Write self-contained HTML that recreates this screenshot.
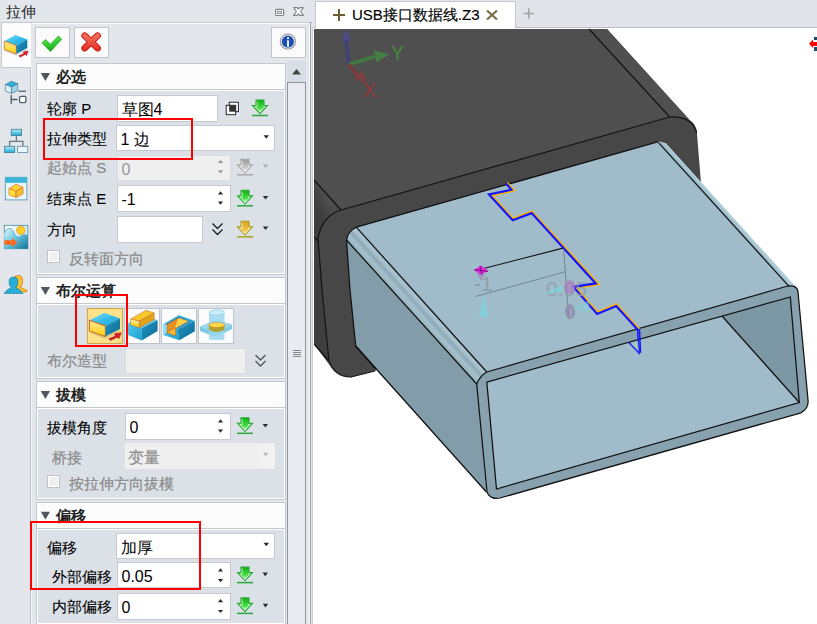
<!DOCTYPE html>
<html><head><meta charset="utf-8">
<style>
*{box-sizing:border-box;margin:0;padding:0}
html,body{width:817px;height:624px;overflow:hidden;background:#e3e7ec;font-family:"Liberation Sans",sans-serif;font-size:15px;color:#1a1a1a;position:relative}
.a{position:absolute}
.t{position:absolute;white-space:nowrap;line-height:15px}
.hdr{position:absolute;left:36px;width:250px;height:27px;background:#fcfcfc;border:1px solid #c3c8cf}
.hdr .tri{position:absolute;left:4px;top:9px;width:0;height:0;border-left:4.5px solid transparent;border-right:4.5px solid transparent;border-top:8px solid #51565f}
.hdr .ht{position:absolute;left:19px;top:5px;font-weight:bold;line-height:15px;color:#222}
.body{position:absolute;left:36px;width:250px;background:#dce1e8;border:1px solid #c3c8cf;box-shadow:inset 1px 1px 0 #fff,inset -1px -1px 0 #fff}
.inp{position:absolute;background:#fff;border:1px solid #c6cad0}
.dis{background:#efefef;border-color:#d9dcdf}
.lbl{position:absolute;white-space:nowrap;line-height:15px;color:#000;-webkit-text-stroke:0.08px #000}
.gray{color:#8a8a8a;-webkit-text-stroke:0.2px #8a8a8a}
.val{position:absolute;left:3.5px;top:6px;line-height:16px;font-size:16px;white-space:nowrap;color:#000}
.dd{position:absolute;width:0;height:0;border-left:2.5px solid transparent;border-right:2.5px solid transparent;border-top:3.5px solid #333}
.du{position:absolute;width:0;height:0;border-left:2.5px solid transparent;border-right:2.5px solid transparent;border-bottom:3.5px solid #333}
.red{position:absolute;border:2px solid #f00}
.btn{position:absolute;background:#fbfbfb;border:1px solid #bfc4cb}
.chk{position:absolute;width:13px;height:13px;border:1px solid #bfc2c6;background:#f0f0f0;box-shadow:inset 0 0 0 1px #fff}
</style></head><body>

<!-- title -->
<div class="t" style="left:6px;top:4px;color:#2e2e2e">拉伸</div>

<!-- panel outer -->
<div class="a" style="left:1px;top:22px;width:311px;height:1px;background:#c3c8cf"></div>
<!-- tab strip border -->
<div class="a" style="left:30px;top:67px;width:1px;height:557px;background:#b9bec6"></div>
<div class="a" style="left:31px;top:67px;width:1px;height:557px;background:#f7f8fa"></div>
<!-- active tab -->
<div class="a" style="left:1px;top:22px;width:30px;height:46px;background:#fcfcfc;border:1px solid #c3c8cf;border-right:none"></div>

<!-- action buttons -->
<div class="btn" style="left:35px;top:27px;width:35px;height:31px"></div>
<div class="btn" style="left:74px;top:27px;width:35px;height:31px"></div>
<div class="btn" style="left:271px;top:27px;width:35px;height:31px"></div>

<!-- scrollbar -->
<div class="a" style="left:287px;top:61px;width:19px;height:21px;background:#d9dee6"></div>
<div class="a" style="left:287px;top:82px;width:19px;height:542px;background:#e8ebf0;border:1px solid #8f969f;border-bottom:none"></div>
<div class="a" style="left:293px;top:350px;width:8px;height:1px;background:#888;box-shadow:0 2px 0 #888,0 4px 0 #888,0 6px 0 #888"></div>
<!-- panel right borders -->
<div class="a" style="left:310px;top:22px;width:1px;height:602px;background:#9aa1aa"></div>
<div class="a" style="left:309px;top:23px;width:1px;height:601px;background:#fafbfc"></div>
<div class="a" style="left:32px;top:23px;width:277px;height:1px;background:#fafbfc"></div>
<div class="a" style="left:313px;top:28px;width:1px;height:596px;background:#fff"></div>
<div class="a" style="left:312px;top:28px;width:1px;height:596px;background:#c8ccd2"></div>

<!-- ===== Section 1 ===== -->
<div class="hdr" style="top:63px"><div class="ht">必选</div></div>
<div class="body" style="top:89px;height:186px"></div>
<div class="lbl" style="left:47px;top:101px">轮廓 P</div>
<div class="inp" style="left:117px;top:95px;width:101px;height:27px"><div class="val">草图4</div></div>
<div class="lbl" style="left:47px;top:131px">拉伸类型</div>
<div class="inp" style="left:116px;top:125px;width:159px;height:26px"><div class="val">1 边</div></div>
<div class="lbl gray" style="left:47px;top:160px">起始点 S</div>
<div class="inp dis" style="left:117px;top:155px;width:114px;height:26px"><div class="val" style="color:#999">0</div></div>

<div class="lbl" style="left:47px;top:191px">结束点 E</div>
<div class="inp" style="left:117px;top:185px;width:114px;height:27px"><div class="val">-1</div></div>

<div class="lbl" style="left:47px;top:222px">方向</div>
<div class="inp" style="left:117px;top:216px;width:86px;height:27px"></div>

<div class="chk" style="left:47px;top:250px"></div>
<div class="lbl gray" style="left:69px;top:251px">反转面方向</div>
<div class="red" style="left:43px;top:118px;width:150px;height:42px"></div>

<!-- ===== Section 2 ===== -->
<div class="hdr" style="top:277px"><div class="ht">布尔运算</div></div>
<div class="body" style="top:303px;height:76px"></div>
<div class="btn" style="left:87px;top:308px;width:36px;height:36px;background:#fde28a;border-color:#d3a54a"></div>
<div class="btn" style="left:124px;top:308px;width:36px;height:36px"></div>
<div class="btn" style="left:161px;top:308px;width:36px;height:36px"></div>
<div class="btn" style="left:198px;top:308px;width:36px;height:36px"></div>
<div class="lbl gray" style="left:47px;top:353px">布尔造型</div>
<div class="inp dis" style="left:125px;top:348px;width:121px;height:26px"></div>
<div class="red" style="left:75px;top:294px;width:53px;height:53px"></div>

<!-- ===== Section 3 ===== -->
<div class="hdr" style="top:381px"><div class="ht">拔模</div></div>
<div class="body" style="top:407px;height:93px"></div>
<div class="lbl" style="left:47px;top:420px">拔模角度</div>
<div class="inp" style="left:125px;top:413px;width:106px;height:27px"><div class="val">0</div></div>

<div class="lbl gray" style="left:52px;top:450px">桥接</div>
<div class="inp dis" style="left:125px;top:443px;width:150px;height:26px;border-color:#eee"><div class="val" style="color:#999;left:2px"></div><div class="val" style="color:#8c8c8c;left:2px;-webkit-text-stroke:0.15px #8c8c8c">变量</div><div class="a" style="left:133px;top:0;width:16px;height:24px;background:#f2f2f2"></div></div>
<div class="chk" style="left:47px;top:475px"></div>
<div class="lbl gray" style="left:69px;top:476px">按拉伸方向拔模</div>

<!-- ===== Section 4 ===== -->
<div class="hdr" style="top:502px"><div class="ht">偏移</div></div>
<div class="body" style="top:528px;height:97px"></div>
<div class="lbl" style="left:47px;top:540px">偏移</div>
<div class="inp" style="left:116px;top:533px;width:159px;height:26px"><div class="val">加厚</div></div>
<div class="lbl" style="left:52px;top:569px">外部偏移</div>
<div class="inp" style="left:117px;top:562px;width:114px;height:26px"><div class="val">0.05</div></div>

<div class="lbl" style="left:52px;top:599px">内部偏移</div>
<div class="inp" style="left:117px;top:593px;width:114px;height:27px"><div class="val">0</div></div>

<div class="red" style="left:30px;top:521px;width:171px;height:69px"></div>

<!-- ===== right: tab bar + viewport ===== -->
<div class="a" style="left:313px;top:0;width:504px;height:28px;background:#e1e5ea;border-bottom:1px solid #b9bec5"></div>
<div class="a" style="left:315px;top:1px;width:201px;height:28px;background:#fff;border:1px solid #c3c8cf;border-bottom:none"></div>
<div class="t" style="left:352px;top:7px;color:#000;-webkit-text-stroke:0.15px #000">USB接口数据线.Z3</div>
<svg class="a" style="left:313px;top:0" width="504" height="28" viewBox="313 0 504 28"><path d="M333,15 H345 M339,9 V21" stroke="#6d5b33" stroke-width="2"/><path d="M487,10.5 L497,19.5 M497,10.5 L487,19.5" stroke="#7d6c45" stroke-width="2.2"/><path d="M523.5,13.5 H534 M528.75,8.3 V18.8" stroke="#a4a4a4" stroke-width="1.6"/></svg>
<div class="a" style="left:314px;top:28px;width:503px;height:596px;background:#fff"></div>
<svg class="a" style="left:0;top:0" width="312" height="624" viewBox="0 0 312 624">
<defs>
<linearGradient id="gGr" x1="0" y1="0" x2="0" y2="1"><stop offset="0" stop-color="#10b010"/><stop offset="0.55" stop-color="#40dd40"/><stop offset="1" stop-color="#d8ffd8"/></linearGradient>
<linearGradient id="gYe" x1="0" y1="0" x2="0" y2="1"><stop offset="0" stop-color="#d7a020"/><stop offset="0.6" stop-color="#f5c040"/><stop offset="1" stop-color="#fff0b0"/></linearGradient>
<linearGradient id="gGy" x1="0" y1="0" x2="0" y2="1"><stop offset="0" stop-color="#9a9a9a"/><stop offset="0.6" stop-color="#c8c8c8"/><stop offset="1" stop-color="#f5f5f5"/></linearGradient>
<linearGradient id="gCy" x1="0" y1="0" x2="0" y2="1"><stop offset="0" stop-color="#bdeefa"/><stop offset="1" stop-color="#15a9d6"/></linearGradient>
<linearGradient id="gSky" x1="0" y1="0" x2="1" y2="1"><stop offset="0" stop-color="#ffffff"/><stop offset="1" stop-color="#a8e0f5"/></linearGradient>
<linearGradient id="gHill" x1="0" y1="0" x2="1" y2="1"><stop offset="0" stop-color="#e8f8fc"/><stop offset="0.45" stop-color="#6cc8e4"/><stop offset="1" stop-color="#0f6f92"/></linearGradient>
<g id="arr"><path d="M4,0.5 H12 V6 H15.5 L8,14.2 L0.5,6 H4 Z" stroke-width="1.1"/><path d="M5.2,1.8 V7.2 H2.9 L8,12.6 L13.1,7.2 H10.8" fill="none" stroke="#fff" stroke-width="0.9" opacity="0.75"/><path d="M0,16 H16" stroke-width="1.5"/></g>
<linearGradient id="cTop" x1="0" y1="0" x2="1" y2="1"><stop offset="0" stop-color="#8fe0f8"/><stop offset="0.5" stop-color="#33bde8"/><stop offset="1" stop-color="#1fa6d6"/></linearGradient>
<linearGradient id="cFr" x1="0" y1="0" x2="0" y2="1"><stop offset="0" stop-color="#ffe9a0"/><stop offset="1" stop-color="#ffd000"/></linearGradient>
<linearGradient id="cRt" x1="0" y1="0" x2="1" y2="1"><stop offset="0" stop-color="#2396c4"/><stop offset="1" stop-color="#0c6a94"/></linearGradient>
<linearGradient id="cLf" x1="0" y1="0" x2="1" y2="1"><stop offset="0" stop-color="#58c8ec"/><stop offset="1" stop-color="#1aa0d0"/></linearGradient>
<g id="cube">
<path d="M0.5,9 L12,21.5 L23,15.5 L23.5,17 L12,23 L0,18 Z" fill="#000" opacity="0.12"/>
<path d="M0,8 L11,2 L23,6.5 L12,12.5 Z" fill="url(#cTop)"/>
<path d="M0,8 L12,12.5 L12,21 L0,16.5 Z" fill="url(#cFr)" stroke="#c8702a" stroke-width="0.8"/>
<path d="M12,12.5 L23,6.5 L23,15 L12,21 Z" fill="url(#cRt)"/>
<path d="M14.5,22.8 L19.5,20.6 L19,18.8 L24,18 L22.2,22.8 L21,21.5 L15.8,24.2 Z" fill="#d8202a" stroke="#b01018" stroke-width="0.4"/>
</g>
</defs>
<!-- tab icon 1 extrude -->
<use href="#cube" transform="translate(4.3,33)"/>
<!-- tab icon 2 -->
<g>
<path d="M5.4,84.5 L11.5,81.3 L17.7,83.7 L11.5,87 Z" fill="#2fb5dd" stroke="#3d6a80" stroke-width="0.6"/>
<path d="M5.4,84.5 L11.5,87 L11.5,93.5 L5.3,91 Z" fill="#d8eef8" stroke="#3d6a80" stroke-width="0.6"/>
<path d="M11.5,87 L17.7,83.7 L17.7,90.5 L11.5,93.5 Z" fill="#9fd4ef" stroke="#3d6a80" stroke-width="0.6"/>
<path d="M18.5,91.3 H26" stroke="#5a6a75" stroke-width="1.4"/>
<path d="M11.2,95 V104 M11.2,99.5 H17.5" stroke="#4c5c68" stroke-width="1.3" fill="none"/>
<rect x="19.6" y="96.3" width="6.3" height="6.3" rx="1" fill="#fff" stroke="#4a6070" stroke-width="1.3"/>
</g>
<!-- tab icon 3 -->
<g>
<rect x="11.2" y="129.3" width="10.2" height="6.2" fill="url(#gCy)" stroke="#3d7a90" stroke-width="0.8"/>
<path d="M16.4,135.5 V141.4 M9.6,146 V141.4 H23 V146" stroke="#6a7a86" stroke-width="1.3" fill="none"/>
<rect x="4.5" y="146.3" width="10.2" height="6.2" fill="url(#gCy)" stroke="#3d7a90" stroke-width="0.8"/>
<rect x="17.6" y="146.3" width="10.2" height="6.2" fill="#e8f8ff" stroke="#5a8aa0" stroke-width="0.8"/>
</g>
<!-- tab icon 4 -->
<g>
<rect x="5.3" y="177.3" width="21.6" height="22.6" fill="#e8f6fc" stroke="#4a90b0" stroke-width="0.8"/>
<rect x="5.3" y="177.3" width="21.6" height="5.5" fill="#3ab5dc"/>
<path d="M9,188.5 L16,184.3 L23,187.3 L16,191.3 Z" fill="#ffd23a" stroke="#e07020" stroke-width="0.7"/>
<path d="M9,188.5 L16,191.3 L16,197.5 L9,194.8 Z" fill="#ffe040" stroke="#e07020" stroke-width="0.7"/>
<path d="M16,191.3 L23,187.3 L23,194 L16,197.5 Z" fill="#f5c030" stroke="#e07020" stroke-width="0.7"/>
</g>
<!-- tab icon 5 -->
<g>
<rect x="4.3" y="225.3" width="23.6" height="23.4" fill="url(#gSky)" stroke="#3a88a8" stroke-width="0.8"/>
<path d="M4.3,233 Q9,225 13,231 Q17,240 21,236 Q25,233 27.9,236 V248.7 H4.3 Z" fill="url(#gHill)"/><path d="M4.3,233 Q9,225 13,231 Q17,240 21,236 Q25,233 27.9,236" fill="none" stroke="#4d93b0" stroke-width="0.7"/>
<circle cx="20.8" cy="230.3" r="4.2" fill="#ffce1f" stroke="#e08a20" stroke-width="0.6"/>
<path d="M4.3,240.3 H12.2 V238 L17.5,242.5 L12.2,247 V244.8 H4.3 Z" fill="#ff6a20"/>
</g>
<!-- tab icon 6 -->
<g>
<path d="M15,276 Q22,274 22.5,279 Q23,286 20,287 L27.5,290.5 L26,292 L17,292 Z" fill="#fbc02a" stroke="#c06a20" stroke-width="0.6"/>
<path d="M13.5,277 Q18,277 18,282 Q18,286.5 15.5,287.5 Q20,289 23,293.5 H4 Q7,289 11.5,287.5 Q9,286.5 9,282 Q9,277 13.5,277 Z" fill="#28aed6" stroke="#1a7aa0" stroke-width="0.6"/>
</g>

<!-- check -->
<linearGradient id="gChk" x1="0" y1="0" x2="0.3" y2="1"><stop offset="0" stop-color="#8ee84a"/><stop offset="0.5" stop-color="#3cd03a"/><stop offset="1" stop-color="#1aae1a"/></linearGradient>
<path d="M42,42.9 L45.6,39.5 L50.4,44.3 L58.4,35.9 L61.7,39.3 L50.4,51.6 Z" fill="url(#gChk)" stroke="#19a819" stroke-width="0.7" stroke-linejoin="round"/>
<!-- X -->
<linearGradient id="gX" x1="0" y1="32" x2="0" y2="52" gradientUnits="userSpaceOnUse"><stop offset="0" stop-color="#f27a66"/><stop offset="1" stop-color="#e42a1c"/></linearGradient>
<path d="M84.7,35.7 L97.6,48.1 M97.6,35.7 L84.7,48.1" stroke="#cc1010" stroke-width="6.6" stroke-linecap="round"/>
<path d="M84.7,35.7 L97.6,48.1 M97.6,35.7 L84.7,48.1" stroke="url(#gX)" stroke-width="4.8" stroke-linecap="round"/>
<!-- info -->
<circle cx="287.9" cy="41.7" r="7.5" fill="#fff" stroke="#a0a0a0" stroke-width="1.3"/>
<circle cx="287.9" cy="41.7" r="6.1" fill="#1b4fb5"/>
<rect x="287" y="37.3" width="2" height="1.8" fill="#fff"/>
<rect x="287" y="40.3" width="2" height="6.5" fill="#eee"/>
<!-- title restore / close -->
<rect x="275.6" y="9.3" width="8" height="6.2" rx="1" fill="#fff" stroke="#80858b" stroke-width="1.2"/>
<rect x="277.7" y="11.4" width="3.8" height="2" fill="#fff" stroke="#80858b" stroke-width="1"/>
<path d="M293.6,7.6 H297.4 L298.5,9.3 L299.6,7.6 H303.4 L300.6,11.5 L303.4,15.4 H299.6 L298.5,13.7 L297.4,15.4 H293.6 L296.4,11.5 Z" fill="#fff" stroke="#80858b" stroke-width="1.1" stroke-linejoin="round"/>
<!-- copy icon -->
<rect x="225" y="101" width="14.7" height="15" fill="#e8e8f6"/>
<rect x="229.2" y="102.2" width="9.2" height="9.5" fill="#fff" stroke="#222" stroke-width="1"/>
<rect x="226.2" y="105.3" width="9.5" height="9.4" fill="#fff" stroke="#222" stroke-width="1"/>
<rect x="229.2" y="105.3" width="6.5" height="6.4" fill="#333"/>
<!-- arrows -->
<use href="#arr" transform="translate(252,99.5)" fill="url(#gGr)" stroke="#2aa83a"/>
<use href="#arr" transform="translate(237,158.8)" fill="url(#gGy)" stroke="#a8a8a8"/>
<use href="#arr" transform="translate(237,189.8)" fill="url(#gGr)" stroke="#2aa83a"/>
<use href="#arr" transform="translate(237,220.8)" fill="url(#gYe)" stroke="#a8a020"/>
<use href="#arr" transform="translate(237,417.3)" fill="url(#gGr)" stroke="#2aa83a"/>
<use href="#arr" transform="translate(237,566.6)" fill="url(#gGr)" stroke="#2aa83a"/>
<use href="#arr" transform="translate(237,597.4)" fill="url(#gGr)" stroke="#2aa83a"/>
<!-- chevrons -->
<path d="M212.5,223.5 L217.5,228.5 L222.5,223.5 M212.5,229.5 L217.5,234.5 L222.5,229.5" fill="none" stroke="#222" stroke-width="1.4"/>
<path d="M255.5,355 L260.5,360 L265.5,355 M255.5,361 L260.5,366 L265.5,361" fill="none" stroke="#555" stroke-width="1.4"/>

<!-- boolean buttons icons -->
<use href="#cube" transform="translate(89.4,310.3) scale(1.33,1.25)"/>
<g>
<path d="M128,323 L143,316 L157.6,320 L141.8,328 Z" fill="#5fd0f0"/>
<path d="M128,323 L141.8,328 L141.8,340.4 L128,335 Z" fill="url(#cLf)"/>
<path d="M141.8,328 L157.6,320 L157.6,331 L141.8,340.4 Z" fill="url(#cRt)"/>
<path d="M130.6,318.9 L146,310.3 L154.2,312.9 L139.4,321.2 Z" fill="#f5c828" stroke="#c06a30" stroke-width="0.5"/>
<path d="M130.6,318.9 L139.4,321.2 L139.4,327.8 L130.6,324.8 Z" fill="url(#cFr)" stroke="#c06a30" stroke-width="0.5"/>
<path d="M139.4,321.2 L154.2,312.9 L154.2,319.5 L139.4,327.8 Z" fill="#e3a318" stroke="#c06a30" stroke-width="0.5"/>
</g>
<g>
<path d="M163.4,324.2 L178.8,315.3 L194.8,320.9 L177.5,329.3 Z" fill="#2a9ccc"/>
<path d="M163.4,324.2 L177.5,329.3 L179.4,340.2 L163.4,334.9 Z" fill="url(#cLf)"/>
<path d="M177.5,329.3 L194.8,320.9 L194.8,331.3 L179.4,340.2 Z" fill="url(#cRt)"/>
<path d="M163.4,324.2 L178.8,315.3 L194.8,320.9" fill="none" stroke="#7fd8f4" stroke-width="0.7"/>
<path d="M166.8,324.4 L178.6,317.9 L188.2,321.3 L175.4,328.2 L175.4,335.6 L166.8,332.6 Z" fill="#e58e22" stroke="#a85410" stroke-width="0.5"/>
<path d="M178.6,317.9 L188.2,321.3 L175.4,328.2 L175.4,326 Z" fill="#ffcf48"/>
<path d="M166.8,332.6 L175.4,335.6 L175.4,328.2 L166.8,333 Z" fill="#ffc030"/>
<path d="M166.8,332.6 L175.4,328.2 L175.4,335.6 Z" fill="#ffbf35" stroke="#a85410" stroke-width="0.4"/>
<path d="M163.4,324.2 L166.8,324.4 L166.8,332.6 L163.4,334.9 Z" fill="#8ee0f8"/>
</g>
<g>
<path d="M200,327 L216,320 L232,325 L216,333 Z" fill="#9ad8ee" stroke="#6ab8d8" stroke-width="0.5"/>
<path d="M200,327 L216,333 L232,325 L232,329 L216,337 L200,331 Z" fill="#7ccbe6"/>
<rect x="209" y="312" width="15.5" height="28" rx="2" fill="#9ad8f0" opacity="0.85"/>
<ellipse cx="216.8" cy="312.5" rx="7.8" ry="2.8" fill="#c8eefa" stroke="#6ab8d8" stroke-width="0.5"/>
<path d="M209,325 V330 Q216.8,334 224.5,330 V325 Z" fill="#b0a030"/>
<ellipse cx="216.8" cy="325" rx="7.8" ry="2.6" fill="#ffd84a" stroke="#c08020" stroke-width="0.5"/>
</g>

<!-- header triangles -->
<path d="M40.8,73 H50 L45.4,81 Z" fill="#51565f"/>
<path d="M40.8,287 H50 L45.4,295 Z" fill="#51565f"/>
<path d="M40.8,391 H50 L45.4,399 Z" fill="#51565f"/>
<path d="M40.8,511.7 H50 L45.4,519.5 Z" fill="#51565f"/>
<!-- small tris -->
<path d="M263.5,135.2 H269.0 L266.25,138.79999999999998 Z" fill="#2b2b2b"/>
<path d="M263.5,542.7 H269.0 L266.25,546.3000000000001 Z" fill="#2b2b2b"/>
<path d="M217.9,163.0 H223.1 L220.5,159.8 Z" fill="#9a9a9a"/>
<path d="M217.9,170.2 H223.1 L220.5,173.39999999999998 Z" fill="#9a9a9a"/>
<path d="M217.9,194.39999999999998 H223.1 L220.5,191.2 Z" fill="#2b2b2b"/>
<path d="M217.9,201.5 H223.1 L220.5,204.7 Z" fill="#2b2b2b"/>
<path d="M217.9,422.4 H223.1 L220.5,419.2 Z" fill="#2b2b2b"/>
<path d="M217.9,429.6 H223.1 L220.5,432.8 Z" fill="#2b2b2b"/>
<path d="M217.9,571.4000000000001 H223.1 L220.5,568.2 Z" fill="#2b2b2b"/>
<path d="M217.9,579 H223.1 L220.5,582.2 Z" fill="#2b2b2b"/>
<path d="M217.9,602.2 H223.1 L220.5,599 Z" fill="#2b2b2b"/>
<path d="M217.9,609.9 H223.1 L220.5,613.1 Z" fill="#2b2b2b"/>
<path d="M262.8,164.5 H268.3 L265.55,168.1 Z" fill="#b0b0b0"/>
<path d="M262.8,196 H268.3 L265.55,199.6 Z" fill="#2b2b2b"/>
<path d="M262.8,226.5 H268.3 L265.55,230.1 Z" fill="#2b2b2b"/>
<path d="M262.6,424 H268.1 L265.35,427.6 Z" fill="#2b2b2b"/>
<path d="M263,452.7 H268.5 L265.75,456.3 Z" fill="#b8b8b8"/>
<path d="M262.5,572.6 H268.0 L265.25,576.2 Z" fill="#2b2b2b"/>
<path d="M262.7,603.8 H268.2 L265.45,607.4 Z" fill="#2b2b2b"/>
<!-- scroll up -->
<path d="M292,74.5 H301 L296.5,69 Z" fill="#444"/>
</svg>

<svg class="a" style="left:314px;top:28px" width="503" height="596" viewBox="314 28 503 596">
<defs>
<linearGradient id="gL" x1="314" y1="200" x2="335" y2="190" gradientUnits="userSpaceOnUse"><stop offset="0" stop-color="#3e3e3e"/><stop offset="0.6" stop-color="#4f4f4f"/><stop offset="1" stop-color="#464646"/></linearGradient>
<linearGradient id="gB" x1="352" y1="233" x2="346" y2="240" gradientUnits="userSpaceOnUse" spreadMethod="pad"><stop offset="0" stop-color="#9fbbc8"/><stop offset="1" stop-color="#9fbbc8"/></linearGradient>
<linearGradient id="gBev" x1="346.5" y1="240" x2="358.2" y2="229.4" gradientUnits="userSpaceOnUse"><stop offset="0" stop-color="#96b1be"/><stop offset="0.3" stop-color="#a6c1ce"/><stop offset="0.55" stop-color="#8ea9b6"/><stop offset="0.78" stop-color="#a9c4d0"/><stop offset="1" stop-color="#a2bdcb"/></linearGradient>
<linearGradient id="gRB" x1="658.5" y1="142.7" x2="662.4" y2="139.2" gradientUnits="userSpaceOnUse"><stop offset="0" stop-color="#8fafbd"/><stop offset="1" stop-color="#b5d3de"/></linearGradient>
</defs>
<!-- ========== dark shell ========== -->
<path d="M314,29 L607,29 L689.4,119.7 Q697,125 697,134 L701,183 L375,371 L352,377 Q338,378 331,367 L314,344 Z" fill="#474747"/>
<path d="M314,29 L589,29 L669.7,117 L341,210 L314,180 Z" fill="#4f4f4f"/>
<path d="M589,29 L607,29 L689.4,119.7 Q683,116.5 669.7,117 Z" fill="#505050"/>
<path d="M314,180 L341,210 Q322,220 318,238 L321,270 L329,361 L314,344 Z" fill="url(#gL)"/>
<g fill="none" stroke="#141414" stroke-width="1.2">
<path d="M589,29 L669.7,117"/>
<path d="M314,180 L341,210"/>
<path d="M337.6,211 L669.7,117 Q686,116 692.7,124.7 Q696,129 696.7,133.2"/>
<path d="M337.6,211 Q322,218 318,238 L322,290 L329,361"/>
<path d="M314,344 L329,361"/>
<path d="M314,237 L318,241"/>
</g>
<!-- ========== metal ========== -->
<path d="M356.3,227.2 L658.5,141.6 Q662,141.5 665.8,143.3 L796,287 Q790,284 786,286.5 L486.8,372 Q480,376 476.7,384 L346.5,240 Q348,231 356.3,227.2 Z" fill="#a0bccb"/>
<path d="M356.3,227.2 L486.8,372 Q480,376 476.7,384 L346.5,240 Q348,231 356.3,227.2 Z" fill="url(#gBev)"/>
<path d="M658.5,142.7 L789,286.3 L796,287 L665.8,143.3 Z" fill="url(#gRB)"/>
<path d="M346.5,240 L476.7,384 L486.4,492 L375,368 L355.7,346 L350,290 Z" fill="#829ca9"/>
<path d="M486.8,372 L786,286.5 Q797,284 798,292 L808,400 Q809,408 801,412.8 L500,498 Q490,500 487,492 L476.7,384 Q480,376 486.8,372 Z" fill="#87a2ae"/>
<path d="M486.8,382.1 L790.3,297 L799.3,402.5 L496.5,489 Z" fill="#a0bccb"/>
<path d="M722,316 L790.3,297 L799.3,402.5 Z" fill="#7d98a5"/>
<g fill="none" stroke="#111" stroke-width="1.25">
<path d="M346.5,240 L476.7,384"/>
<path d="M356.3,227.2 L486.8,372"/>
<path d="M355.7,346 L486.4,492"/>
<path d="M486.8,372 L786,286.5 Q797,284 798,292 L808,400 Q809,408 801,412.8 L500,498 Q490,500 487,492 L476.7,384 Q480,376 486.8,372 Z"/>
<path d="M486.8,382.1 L790.3,297 L799.3,402.5 L496.5,489 Z"/>
<path d="M722,316 L799.3,402.5"/>
<path d="M658.5,142.7 L789,286.3"/>
<path d="M658.5,141.6 L356.3,227.2 Q348,231 346.5,240 L350,290 L355.7,346 L375,368"/>
<path d="M329,361 Q334,376 350,377 L375,371" stroke="#222"/>
</g>
<!-- ========== sketch / dims ========== -->
<g fill="none" stroke-linejoin="miter" stroke-linecap="square">
<polyline points="508.0,183.3 514.3,190.6 491.9,195.5 513.1,218.5 532.0,211.3 598.9,284.4 576.4,288.0 597.5,312.0 616.6,304.1 638.6,328.5" stroke="#ffb400" stroke-width="1.9"/>
<polyline points="506.8,184.3 511.5,189.7 489.0,194.5 512.7,220.3 531.6,213.1 595.8,283.4 573.4,286.9 597.1,313.9 616.2,306.0 637.5,329.5" stroke="#1515ff" stroke-width="2.2"/>
<path d="M637.5,329 L639,353 L629.5,343 M639.5,330 L640.5,352" stroke="#1515ff" stroke-width="1.5"/>
</g>
<path d="M631,344 L639,352 L638,341 Z" fill="#a4d4b8" opacity="0.6"/>
<g stroke="#6f8088" stroke-width="0.9" fill="none">
<path d="M475.5,296.5 L565.9,271.6"/>
<path d="M563.6,248.8 L568.8,319.3"/>
</g>
<path d="M474.8,270.8 L562.9,248.1" stroke="#111" stroke-width="1.1"/>
<g fill="#8e9ea6" font-family="Liberation Sans, sans-serif" font-size="21">
<text x="474" y="291">-1</text>
<text x="546" y="295.5" opacity="0.8">0.05</text>
<text x="565" y="318.6" font-size="19">0</text>
</g>
<path d="M474,270 L478,267.5 L481,265.5 L484,267.5 L488,270.5 L484,273 L481,275 L478,273 Z" fill="#e028e0"/>
<path d="M474.5,269.5 L488,271.5 M480,266 L482,275" stroke="#600060" stroke-width="0.8"/>
<path d="M477,274 L485,274 L481,281 Z" fill="#a080b0" opacity="0.7"/>
<path d="M483.3,295.8 L479,316.4 L489,316.4 Z" fill="#7fd2dc" opacity="0.85"/>
<path d="M541,294 L563,285 L563,292 Z" fill="#7fd2dc" opacity="0.7"/>
<ellipse cx="570" cy="287" rx="5.5" ry="7" fill="#b070c0" opacity="0.55"/>
<ellipse cx="570" cy="311" rx="4.5" ry="7" fill="#9080b8" opacity="0.5" stroke="#888" stroke-width="0.8"/>
<path d="M572,308 L590,300 L588,312 Z" fill="#7fd2dc" opacity="0.5"/>
<!-- ========== axis triad ========== -->
<g opacity="0.7">
<path d="M348.6,64.5 L346.3,40" stroke="#3b3b8f" stroke-width="3.5"/>
<path d="M341.2,41.5 Q346.3,39 351.6,41.5 L346.3,29 Z" fill="#4a4a9e"/>
<path d="M348.6,64.5 L375,56.5" stroke="#3a8a3a" stroke-width="3.5"/>
<path d="M373.5,50.5 Q376,56 376.5,62 L389.5,54.3 Z" fill="#3f963f"/>
<path d="M348.6,64.5 L358,76" stroke="#8f3535" stroke-width="3.5"/>
<path d="M353.5,77.5 Q358,75 362.5,70.5 L367,84.4 Z" fill="#933a3a"/>
</g>
<text x="391.5" y="60" fill="#3f9a3f" opacity="0.85" font-family="Liberation Sans, sans-serif" font-size="20" textLength="12" lengthAdjust="spacingAndGlyphs">Y</text>
<text x="363.5" y="97" fill="#a03535" opacity="0.85" font-family="Liberation Sans, sans-serif" font-size="20" textLength="12" lengthAdjust="spacingAndGlyphs">X</text>
<!-- right top icon -->
<path d="M809,43.7 L813,39.5 L813,42 L817,42 L817,46 L813,46 L813,48 Z" fill="#f00"/>
<path d="M814,37 L817,37 L817,40 L814,40 Z M814,47 L817,47 L817,51 L814,51 Z" fill="#1a4a6a"/>
</svg>


</body></html>
